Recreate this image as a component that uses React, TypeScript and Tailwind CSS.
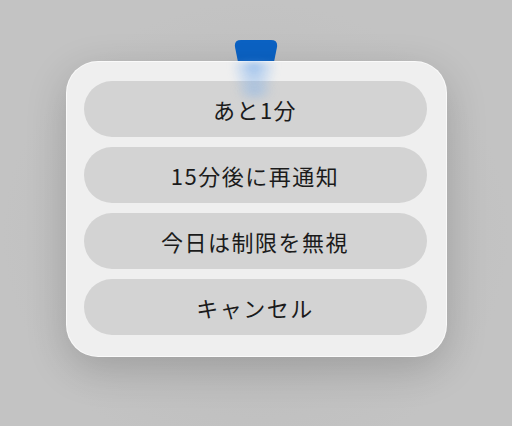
import React from "react";

const items = ["あと1分", "15分後に再通知", "今日は制限を無視", "キャンセル"];

export default function App() {
  return (
    <div
      className="w-[512px] h-[426px] bg-[#c3c3c3] flex flex-col items-center overflow-hidden relative"
      style={{ fontFamily: '"Noto Sans CJK JP", "Noto Sans", sans-serif' }}
    >
      <div className="absolute inset-0 bg-[radial-gradient(ellipse_at_50%_55%,#b9b9b9_0%,#c3c3c3_70%)]" />
      <div className="relative mt-[40px] h-[22px] w-[44px] z-0">
        <svg width="44" height="22" viewBox="0 0 44 22" className="block">
          <path d="M7 0 H37 Q44 0 43 7 L40 22 H4 L1 7 Q0 0 7 0 Z" fill="#0b62c4" />
        </svg>
      </div>
      <div className="relative w-[381px] -mt-px bg-[#efefef] rounded-[32px] pt-[19px] pb-[21px] pl-[17px] pr-[19px] flex flex-col gap-[10px] shadow-[0_12px_40px_rgba(0,0,0,0.18)] border border-white/70">
        {items.map((t) => (
          <div
            key={t}
            className="h-[56px] rounded-full bg-[#d3d3d3] flex items-center justify-center text-[22px] text-[#1b1b1b] tracking-[1.5px]"
          >
            {t}
          </div>
        ))}
        <div className="absolute left-[165px] top-0 w-[44px] h-[36px] pointer-events-none bg-[radial-gradient(ellipse_at_50%_0%,rgba(80,150,235,0.55)_0%,rgba(120,175,240,0.25)_45%,rgba(160,200,245,0)_75%)] blur-[3px]" />
        <div className="absolute left-[168px] top-[18px] w-[40px] h-[22px] pointer-events-none bg-[radial-gradient(ellipse_at_50%_50%,rgba(110,170,240,0.35)_0%,rgba(160,200,245,0)_70%)] blur-[4px]" />
      </div>
    </div>
  );
}
